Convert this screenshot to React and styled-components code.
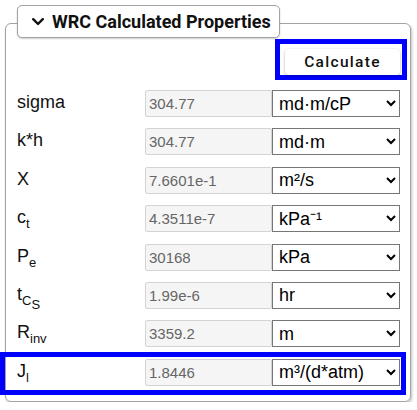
import React from "react";
import styled, { createGlobalStyle } from "styled-components";

const GlobalStyle = createGlobalStyle`
  body {
    margin: 0;
    background: #ffffff;
    font-family: "Liberation Sans", Arial, sans-serif;
  }
`;

const Panel = styled.section`
  box-sizing: border-box;
  width: 406px;
  margin: 23px 0 0 5px;
  padding: 0 10px 15px 11px;
  border: 1px solid #a3a3a3;
  border-radius: 6px;
  box-shadow: 1px 2px 3px rgba(0, 0, 0, 0.25);
`;

const Header = styled.div`
  box-sizing: border-box;
  display: flex;
  align-items: center;
  gap: 8px;
  width: fit-content;
  height: 33px;
  margin-top: -19px;
  padding: 0 8px 0 14px;
  border: 1px solid #a3a3a3;
  border-radius: 5px;
  background: #ffffff;
  box-shadow: 0 1px 2px rgba(0, 0, 0, 0.2);
  font-family: Roboto, "Liberation Sans", sans-serif;
  font-weight: 700;
  font-size: 18px;
  color: #111111;
`;

const Toolbar = styled.div`
  display: flex;
  justify-content: flex-end;
  margin: 1px -7px 10px 0;
`;

const CalcFrame = styled.div`
  display: flex;
  padding: 5px 2px 0 5px;
  border: 5px solid #0000ff;
`;

const CalcButton = styled.button`
  width: 115px;
  height: 26px;
  border: none;
  border-radius: 4px;
  background: #ffffff;
  box-shadow: 0 1px 3px rgba(0, 0, 0, 0.3);
  font-family: Roboto, "Liberation Sans", sans-serif;
  font-weight: 500;
  font-size: 15.5px;
  letter-spacing: 1.3px;
  color: #111111;
  cursor: pointer;
`;

const Rows = styled.div`
  display: grid;
  row-gap: 11.4px;
`;

const Row = styled.div`
  display: grid;
  grid-template-columns: 128px 127px 128px;
  align-items: center;
  height: 27px;
  ${(p) =>
    p.$highlight &&
    `
    margin: -2px -1px -4px -12px;
    padding: 2px 1px 4px 12px;
    outline: 5px solid #0000ff;
  `}
`;

const Label = styled.span`
  font-size: 18px;
  color: #111111;
  padding-bottom: 2px;

  & sub {
    font-size: 13px;
    line-height: 0;
  }
`;

const Value = styled.input`
  box-sizing: border-box;
  width: 127px;
  height: 27px;
  padding: 0 3px;
  border: 1px solid #d4d4d4;
  border-radius: 2px;
  background: #f5f5f5;
  font-family: "Liberation Sans", Arial, sans-serif;
  font-size: 15px;
  color: #666666;
  outline: none;
`;

const Unit = styled.select`
  box-sizing: border-box;
  width: 128px;
  height: 27px;
  padding: 0 14px 0 2px;
  border: 1px solid #767676;
  border-radius: 0;
  background: #ffffff;
  font-family: "Liberation Sans", Arial, sans-serif;
  font-size: 18px;
  color: #000000;
`;

function Chevron() {
  return (
    <svg width="12" height="8" viewBox="0 0 12 8" aria-hidden>
      <polyline
        points="1.2,1.2 6,6 10.8,1.2"
        fill="none"
        stroke="#111"
        strokeWidth="2.4"
        strokeLinecap="round"
        strokeLinejoin="round"
      />
    </svg>
  );
}

const rows = [
  { label: "sigma", value: "304.77", unit: "md·m/cP" },
  { label: "k*h", value: "304.77", unit: "md·m" },
  { label: "X", value: "7.6601e-1", unit: "m²/s" },
  { label: <>c<sub>t</sub></>, value: "4.3511e-7", unit: "kPa⁻¹" },
  { label: <>P<sub>e</sub></>, value: "30168", unit: "kPa" },
  { label: <>t<sub>C<sub>S</sub></sub></>, value: "1.99e-6", unit: "hr" },
  { label: <>R<sub>inv</sub></>, value: "3359.2", unit: "m" },
  { label: <>J<sub>l</sub></>, value: "1.8446", unit: "m³/(d*atm)", highlight: true },
];

export default function App() {
  return (
    <>
      <GlobalStyle />
      <Panel>
        <Header>
          <Chevron />
          WRC Calculated Properties
        </Header>
        <Toolbar>
          <CalcFrame>
            <CalcButton type="button">Calculate</CalcButton>
          </CalcFrame>
        </Toolbar>
        <Rows>
          {rows.map((r, i) => (
            <Row key={i} $highlight={r.highlight}>
              <Label>{r.label}</Label>
              <Value readOnly value={r.value} />
              <Unit defaultValue={r.unit}>
                <option>{r.unit}</option>
              </Unit>
            </Row>
          ))}
        </Rows>
      </Panel>
    </>
  );
}
